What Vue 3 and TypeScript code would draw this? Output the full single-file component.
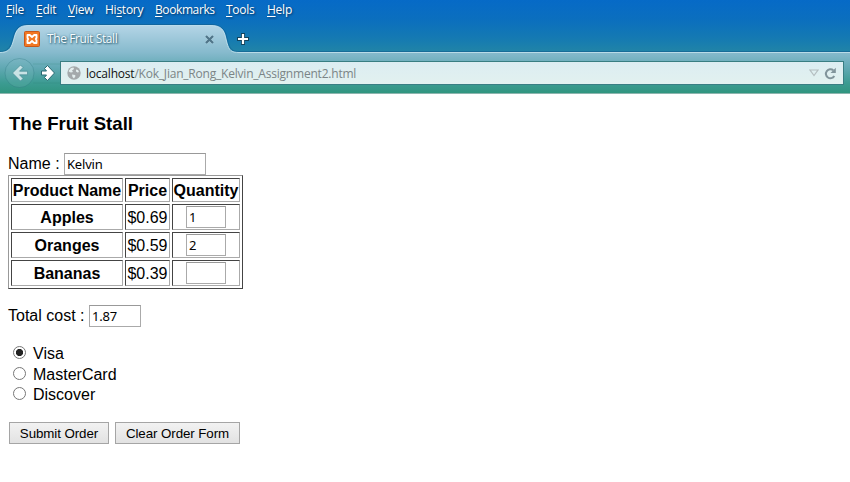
<script setup lang="ts">
import { ref } from 'vue'

interface MenuItem { before: string; key: string; after: string }
interface Product { name: string; price: string; qty: string }

const menu: MenuItem[] = [
  { before: '', key: 'F', after: 'ile' },
  { before: '', key: 'E', after: 'dit' },
  { before: '', key: 'V', after: 'iew' },
  { before: 'Hi', key: 's', after: 'tory' },
  { before: '', key: 'B', after: 'ookmarks' },
  { before: '', key: 'T', after: 'ools' },
  { before: '', key: 'H', after: 'elp' },
]

const customer = ref('Kelvin')
const products = ref<Product[]>([
  { name: 'Apples', price: '$0.69', qty: '1' },
  { name: 'Oranges', price: '$0.59', qty: '2' },
  { name: 'Bananas', price: '$0.39', qty: '' },
])
const total = ref('1.87')
const cards: string[] = ['Visa', 'MasterCard', 'Discover']
const card = ref('Visa')
</script>

<template>
  <div class="window">
    <header class="chrome">
      <nav class="menu">
        <span v-for="m in menu" :key="m.key" class="menu-item">{{ m.before }}<u>{{ m.key }}</u>{{ m.after }}</span>
      </nav>
      <div class="tabs">
        <svg class="tab-shape" width="850" height="69" viewBox="0 0 850 69">
          <defs>
            <linearGradient id="bar" x1="0" y1="0" x2="0" y2="1">
              <stop offset="0" stop-color="#b4d5e6" />
              <stop offset="0.4" stop-color="#86bacd" />
              <stop offset="0.62" stop-color="#62a9b4" />
              <stop offset="0.85" stop-color="#3c9b92" />
              <stop offset="1" stop-color="#30957f" />
            </linearGradient>
          </defs>
          <path d="M0 28.500C8 28.500 11 25 13 18L15 11C17 5 20 1.500 28 1.500H211C219 1.500 223 4 225 11L227 19C229 26 231 28.500 239 28.500H850V69H0Z" fill="url(#bar)" />
          <path d="M0 27.500C7 27.500 10 24 12 17L14 10C16 4 20 .5 28 .5H211C219 .5 224 4 226 10L228 18C230 25 232 27.500 239 27.500H850" fill="none" stroke="#135f91" stroke-opacity=".65" />
          <path d="M0 28.500C8 28.500 11 25 13 18L15 11C17 5 20 1.500 28 1.500H211C219 1.500 223 4 225 11L227 19C229 26 231 28.500 239 28.500H850" fill="none" stroke="#d2eaf3" stroke-opacity=".8" />
        </svg>
        <div class="tab">
          <svg class="favicon" width="16" height="16" viewBox="0 0 16 16">
            <rect x=".5" y=".5" width="15" height="15" rx="1" fill="#f27823" stroke="#c75719" />
            <path d="M3.500 4H5.800L8 6L10.200 4H12.500V7L11.800 8L12.500 9V12H10.200L8 10L5.800 12H3.500V9L4.200 8L3.500 7Z" fill="none" stroke="#fff" stroke-width="1.900" stroke-linejoin="round" />
          </svg>
          <span class="tab-title">The Fruit Stall</span>
          <svg class="close" width="9" height="9" viewBox="0 0 9 9"><path d="M1.300 1.300L7.700 7.700M7.700 1.300L1.300 7.700" stroke="#d5eaf2" stroke-width="3" opacity=".5" /><path d="M1 1L8 8M8 1L1 8" stroke="#4f7589" stroke-width="2.300" /></svg>
        </div>
        <svg class="plus" width="14" height="14" viewBox="0 0 14 14"><path d="M7 1V13M1 7H13" stroke="#12445e" stroke-width="4" /><path d="M7 2V12M2 7H12" stroke="#fff" stroke-width="2.200" /></svg>
      </div>
      <div class="toolbar">
        <svg class="arrows" width="60" height="38" viewBox="0 0 60 38">
          <path d="M33 10H60M33 29H60" stroke="#28766f" stroke-opacity=".2" />
          <circle cx="19.500" cy="19" r="14.500" fill="#82bfc5" fill-opacity=".2" stroke="#276f79" stroke-opacity=".3" />
          <path d="M12.500 19L20.500 11L23 13.500L19.500 17.200H27.500V20.800H19.500L23 24.500L20.500 27Z" fill="#c9e3e5" stroke="#468d97" stroke-width=".7" />
          <path d="M54.500 19L47.500 11.500L44.500 14.500L46.500 17H41.500V21H46.500L44.500 23.500L47.500 26.500Z" fill="#fff" stroke="#286972" stroke-width="1" />
        </svg>
        <div class="address">
          <svg class="globe" width="14" height="14" viewBox="0 0 14 14">
            <circle cx="7" cy="7" r="6.700" fill="#a4a9ab" />
            <path d="M1.500 5L4 2L6.500 1.500L7 3L5 4.500L6 6L4 6.500L2.500 6ZM9 3.500L11 4L12 6L10.500 6.500L9 5.500ZM5 8.500L8 9L8.500 10L7 12.500L5.500 11Z" fill="#e4eeee" />
          </svg>
          <span class="url"><b>localhost</b>/Kok_Jian_Rong_Kelvin_Assignment2.html</span>
          <svg class="drop" width="10" height="8" viewBox="0 0 10 8"><path d="M1 1H9L5 6.500Z" fill="none" stroke="#b4bec0" stroke-width="1.200" /></svg>
          <svg class="reload" width="13" height="13" viewBox="0 0 13 13"><path d="M9.300 3.300A4.500 4.500 0 1 0 10.300 9" fill="none" stroke="#81949b" stroke-width="2" /><path d="M11.800 .8V6H6.500Z" fill="#81949b" /></svg>
        </div>
      </div>
    </header>

    <main class="page">
      <h3>The Fruit Stall</h3>
      <form @submit.prevent>
        <label class="field name"><span>Name :</span><input v-model="customer" type="text"></label>
        <table>
          <thead>
            <tr><th class="product">Product Name</th><th class="price">Price</th><th class="quantity">Quantity</th></tr>
          </thead>
          <tbody>
            <tr v-for="p in products" :key="p.name">
              <th>{{ p.name }}</th><td>{{ p.price }}</td><td class="qty"><input v-model="p.qty" type="text"></td>
            </tr>
          </tbody>
        </table>
        <label class="field total"><span>Total cost :</span><input v-model="total" type="text"></label>
        <div class="cards">
          <label v-for="c in cards" :key="c"><input v-model="card" type="radio" name="card" :value="c"><span>{{ c }}</span></label>
        </div>
        <div class="actions">
          <button class="submit" type="submit">Submit Order</button>
          <button class="clear" type="button">Clear Order Form</button>
        </div>
      </form>
    </main>
  </div>
</template>

<style>
body { margin: 0; background: #fff; overflow: hidden; }
</style>

<style scoped>
* { box-sizing: border-box; }
svg { display: block; flex: none; }
.window { width: 850px; height: 482px; background: #fff; }
.chrome { position: relative; height: 94px; background: linear-gradient(#066ac7 0, #0b6fbe 20px, #167bb1 40px, #2386a5 54px); border-bottom: 1px solid #8cb5ae; font: 12px/20px "Open Sans", "Noto Sans", sans-serif; }
.menu { height: 25px; padding-left: 6px; display: grid; grid-template-columns: 30px 32px 37px 50px 71px 41px 40px; color: #fff; text-shadow: 1px 1px 2px #063460; letter-spacing: -.25px; }
.menu-item { white-space: nowrap; }
.menu-item:nth-child(5) { letter-spacing: -.4px; }
.menu u { text-underline-offset: 2px; text-decoration-thickness: 1px; }
.tabs { height: 28px; display: flex; align-items: center; }
.tab-shape { position: absolute; left: 0; top: 24px; }
.tab { position: relative; width: 226px; padding: 0 12px 0 24px; display: flex; align-items: center; }
.tab-title { margin-left: 7px; color: #f7fcff; text-shadow: 1px 1px 2px #285b70, 0 0 2px #477e94; letter-spacing: -.4px; }
.close { margin-left: auto; }
.plus { position: relative; margin-left: 10px; }
.toolbar { position: relative; height: 40px; display: flex; align-items: flex-start; }
.arrows { margin-top: 1px; }
.address { margin-top: 8px; width: 784px; height: 24px; padding: 0 6px 0 6px; display: flex; align-items: center; border: 1px solid #397e83; background: linear-gradient(#dcedf2, #e2f1ef); }
.url { margin-left: 5px; padding-top: 1px; color: #7b8586; white-space: nowrap; letter-spacing: -.21px; }
.url b { color: #111; font-weight: 400; }
.drop { margin-left: auto; }
.reload { margin-left: 5px; margin-right: 0; }
.page { padding: 19px 8px; color: #000; font: 16px/18px "Liberation Sans", Arial, sans-serif; }
h3 { margin: 0 0 19px; padding-left: 1px; height: 21px; font-size: 18.600px; line-height: 21px; }
.field { display: flex; height: 22px; align-items: center; }
.field span { padding-bottom: 1px; }
input[type="text"] { height: 22px; margin: 0; padding: 1px 2px; border: 1px solid #aaa; border-top-color: #999; border-radius: 0; background: #fff; color: #000; font: 13px "Noto Sans", sans-serif; outline: 0; letter-spacing: -.2px; }
.name span { width: 56px; }
.name input { width: 142px; }
table { width: 235px; height: 114px; border: 1px solid; border-color: #999 #444 #444 #999; border-collapse: separate; border-spacing: 2px; table-layout: fixed; }
th, td { height: 26px; padding: 2px 0 0; border: 1px solid; border-color: #444 #aaa #aaa #444; text-align: center; white-space: nowrap; }
thead th { height: 24px; }
td.qty { padding: 0; }
.product { width: 112px; }
.price { width: 45px; }
.quantity { width: 68px; }
.qty input { display: block; width: 40px; margin: 0 auto; }
.total { margin-top: 16px; }
.total span { width: 81px; }
.total input { width: 52px; }
.cards { margin-top: 16px; display: grid; grid-template-rows: 20px 21px 20px; }
.cards label { display: flex; align-items: center; }
.cards span { padding-top: 2px; }
.cards input { appearance: none; width: 13px; height: 13px; margin: 0 7px 1px 5px; border: 1px solid #777; border-radius: 50%; background: #fff; }
.cards input:checked { background: radial-gradient(circle, #222 0 3.300px, #fff 3.900px); }
.actions { display: flex; gap: 6px; margin: 18px 0 0 1px; }
button { height: 22px; padding: 0; border: 1px solid #a5a5a5; border-radius: 0; background: linear-gradient(#f2f2f2, #e2e2e2); color: #000; font: 13.333px "Liberation Sans", Arial, sans-serif; letter-spacing: -.08px; }
.submit { width: 100px; }
.clear { width: 125px; }
</style>
